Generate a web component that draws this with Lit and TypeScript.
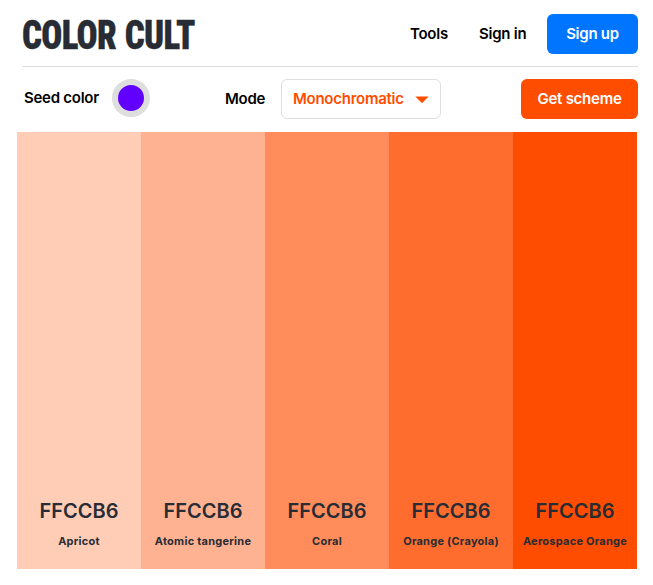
import { LitElement, html, css } from "lit";
import { customElement, property } from "lit/decorators.js";

const SCHEME = [
  { hex: "FFCCB6", name: "Apricot", fill: "#ffccb6" },
  { hex: "FFCCB6", name: "Atomic tangerine", fill: "#ffb292" },
  { hex: "FFCCB6", name: "Coral", fill: "#ff8c5a" },
  { hex: "FFCCB6", name: "Orange (Crayola)", fill: "#ff6d2e" },
  { hex: "FFCCB6", name: "Aerospace Orange", fill: "#ff4d00" },
];

@customElement("color-swatch")
class ColorSwatch extends LitElement {
  @property() hex = "";
  @property() name = "";

  static styles = css`
    :host {
      display: flex;
      flex-direction: column;
      justify-content: flex-end;
      align-items: center;
      box-sizing: border-box;
      padding-bottom: 20px;
      color: #282c34;
      white-space: nowrap;
    }
    .hex {
      font-size: 20px;
      line-height: 24px;
      font-weight: 600;
      margin-bottom: 10px;
    }
    .name {
      font-size: 11px;
      line-height: 16px;
      font-weight: 700;
      letter-spacing: 0.25px;
    }
  `;

  render() {
    return html`<div class="hex">${this.hex}</div>
      <div class="name">${this.name}</div>`;
  }
}

@customElement("app-root")
class AppRoot extends LitElement {
  static styles = css`
    :host {
      display: flex;
      flex-direction: column;
      box-sizing: border-box;
      width: 653px;
      height: 585px;
      padding: 0 15px 16px 17px;
      background: #fff;
      color: #000;
      font-family: Inter, "Liberation Sans", sans-serif;
      font-size: 15px;
      font-weight: 600;
      letter-spacing: -0.26px;
      white-space: nowrap;
    }
    header {
      display: flex;
      align-items: center;
      box-sizing: border-box;
      height: 67px;
      padding-top: 1px;
      margin-left: 5px;
      border-bottom: 1px solid #dedede;
    }
    .logo {
      width: 180px;
      height: 50px;
      overflow: visible;
      margin-right: auto;
      font-family: Roboto, sans-serif;
      font-size: 40.5px;
      font-weight: 900;
      font-stretch: 75%;
      letter-spacing: -0.8px;
      word-spacing: 1.5px;
      fill: #282c34;
      stroke: #282c34;
      stroke-width: 0.3px;
    }
    .link {
      width: 47px;
      margin-right: 21px;
    }
    .tools {
      width: 38px;
      margin-right: 31px;
    }
    .button {
      display: flex;
      align-items: center;
      justify-content: center;
      box-sizing: border-box;
      height: 40px;
      border: 0;
      padding: 0;
      border-radius: 6px;
      font: inherit;
      letter-spacing: inherit;
      color: #fff;
    }
    .signup {
      width: 91px;
      background: #0075ff;
    }
    .scheme {
      width: 117px;
      background: #ff4d00;
      margin-left: auto;
    }
    .controls {
      display: flex;
      align-items: center;
      box-sizing: border-box;
      height: 65px;
      padding-bottom: 2px;
      margin-left: 7px;
    }
    .seed {
      width: 88px;
      margin-top: -2px;
    }
    .picker {
      box-sizing: border-box;
      width: 38px;
      height: 38px;
      border: 6px solid #dedede;
      border-radius: 50%;
      background: #6200ff;
      margin-top: -2px;
    }
    .mode {
      width: 56px;
      margin-left: 75px;
    }
    .select {
      display: flex;
      align-items: center;
      justify-content: space-between;
      box-sizing: border-box;
      width: 160px;
      height: 40px;
      padding: 0 11px;
      border: 1px solid #dedede;
      border-radius: 6px;
      color: #ff4d00;
    }
    .caret {
      width: 14px;
      height: 7px;
      margin-top: 2px;
      fill: #ff4d00;
    }
    .palette {
      display: grid;
      grid-template-columns: repeat(5, 124px);
      flex: 1;
      letter-spacing: 0;
    }
  `;

  render() {
    return html`
      <header>
        <svg class="logo" viewBox="0 0 180 50">
          <text x="0" y="40" textLength="172.7" lengthAdjust="spacingAndGlyphs">COLOR CULT</text>
        </svg>
        <span class="tools">Tools</span>
        <span class="link">Sign in</span>
        <button class="button signup">Sign up</button>
      </header>
      <div class="controls">
        <span class="seed">Seed color</span>
        <span class="picker"></span>
        <span class="mode">Mode</span>
        <div class="select">
          <span>Monochromatic</span>
          <svg class="caret" viewBox="0 0 14 7">
            <path d="M0.3 0.4H13.7L7.4 6.7H6.6Z" />
          </svg>
        </div>
        <button class="button scheme">Get scheme</button>
      </div>
      <div class="palette">
        ${SCHEME.map(
          (c) => html`<color-swatch
            .hex=${c.hex}
            .name=${c.name}
            style="background:${c.fill}"
          ></color-swatch>`
        )}
      </div>
    `;
  }
}
